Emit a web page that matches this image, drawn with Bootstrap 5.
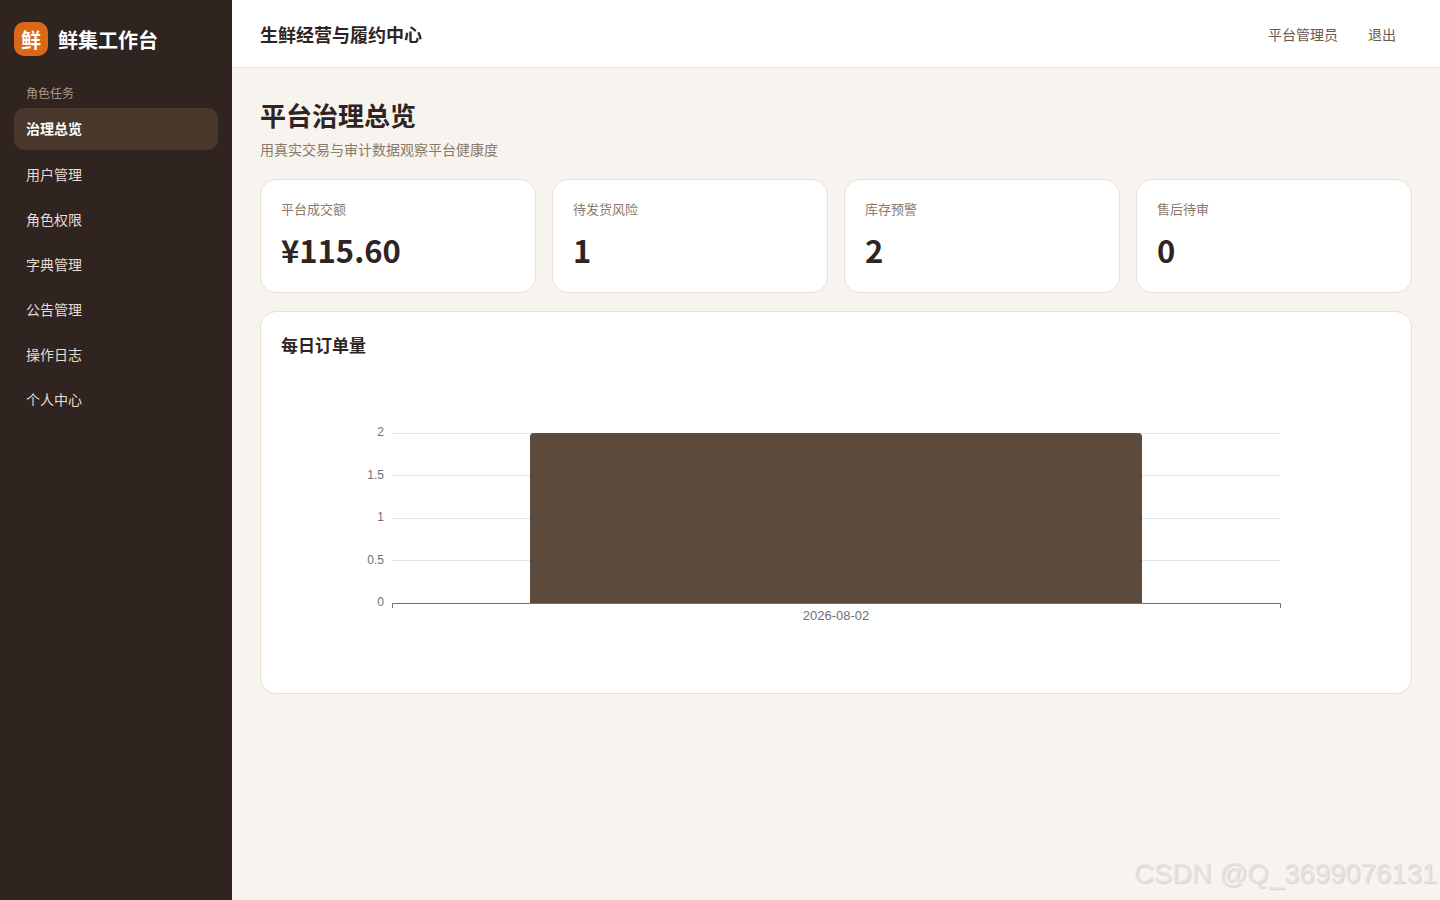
<!DOCTYPE html>
<html lang="zh-CN">
<head>
  <meta charset="UTF-8">
  <title>鲜集工作台</title>
  <link rel="stylesheet" href="https://cdn.jsdelivr.net/npm/bootstrap@5.3.3/dist/css/bootstrap.min.css">
  <script src="https://cdn.jsdelivr.net/npm/bootstrap@5.3.3/dist/js/bootstrap.bundle.min.js"></script>
  <style>
    body { font-family: "Noto Sans CJK SC", "Noto Sans", sans-serif; background: #f7f4ef; color: #2f241f; height: 900px; overflow: hidden; }
    .shell { height: 900px; }
    .side { width: 232px; background: #2f241f; padding: 22px 14px; flex-shrink: 0; }
    .brand-logo { width: 34px; height: 34px; background: #d96818; border-radius: 10px; color: #fff; font-size: 20px; font-weight: 700; line-height: 35px; text-align: center; }
    .brand-name { color: #fff; font-size: 20px; font-weight: 700; line-height: 36px; margin-left: 10px; }
    .side-label { color: #a8988a; font-size: 12px; line-height: 18px; margin: 26px 0 6px 12px; }
    .side .nav { gap: 3px; }
    .side .nav-link { color: #e6dcd3; font-size: 14px; line-height: 43px; height: 42px; padding: 0 12px; border-radius: 10px; }
    .side .nav-link.active { background: #4a382c; color: #fff; font-weight: 700; line-height: 41px; }
    .topbar { height: 68px; background: #fff; border-bottom: 1px solid #e8e2db; padding: 1px 29px 0 28px; }
    .top-title { font-size: 18px; font-weight: 700; }
    .top-link { font-size: 14px; color: #6b5a4e; padding: 0 15px; }
    .main-area { padding: 28px 28px 0; }
    .page-title { font-size: 26px; font-weight: 700; line-height: 38px; margin: 0; }
    .page-sub { font-size: 14px; line-height: 20px; color: #8a7868; margin: 5px 0 20px; }
    .stat-box { height: 114px; border: 1px solid #eadfd6; border-radius: 16px; padding: 19px 20px 20px; }
    .stat-name { font-size: 13px; line-height: 20px; color: #8a7868; }
    .stat-num { font-size: 31px; font-weight: 700; line-height: 44px; margin-top: 9px; }
    .chart-box { height: 383px; margin-top: 18px; border: 1px solid #eadfd6; border-radius: 16px; padding: 20px; }
    .chart-title { font-size: 17px; font-weight: 700; line-height: 26px; }
    .chart-svg { display: block; margin-top: 15px; }
    .chart-svg text { font-family: "Liberation Sans", sans-serif; font-size: 12px; fill: #6e7079; }
    .chart-svg .date-tick { font-size: 13px; }
    .watermark { position: absolute; right: 3px; bottom: 9px; font-family: "Liberation Sans", sans-serif; font-size: 27.5px; line-height: 34px; color: #e4e3e0; text-shadow: 1px 1px 1px rgba(0, 0, 0, .14); }
  </style>
</head>
<body>
  <div class="shell d-flex position-relative">
    <aside class="side">
      <div class="d-flex">
        <div class="brand-logo">鲜</div>
        <div class="brand-name">鲜集工作台</div>
      </div>
      <div class="side-label">角色任务</div>
      <nav class="nav flex-column">
        <a class="nav-link active" href="#">治理总览</a>
        <a class="nav-link" href="#">用户管理</a>
        <a class="nav-link" href="#">角色权限</a>
        <a class="nav-link" href="#">字典管理</a>
        <a class="nav-link" href="#">公告管理</a>
        <a class="nav-link" href="#">操作日志</a>
        <a class="nav-link" href="#">个人中心</a>
      </nav>
    </aside>

    <div class="flex-grow-1">
      <header class="topbar d-flex align-items-center justify-content-between">
        <div class="top-title">生鲜经营与履约中心</div>
        <div class="d-flex">
          <span class="top-link">平台管理员</span>
          <span class="top-link">退出</span>
        </div>
      </header>

      <main class="main-area">
        <h1 class="page-title">平台治理总览</h1>
        <p class="page-sub">用真实交易与审计数据观察平台健康度</p>

        <div class="row g-3">
          <div class="col-3"><div class="stat-box bg-white"><div class="stat-name">平台成交额</div><div class="stat-num">¥115.60</div></div></div>
          <div class="col-3"><div class="stat-box bg-white"><div class="stat-name">待发货风险</div><div class="stat-num">1</div></div></div>
          <div class="col-3"><div class="stat-box bg-white"><div class="stat-name">库存预警</div><div class="stat-num">2</div></div></div>
          <div class="col-3"><div class="stat-box bg-white"><div class="stat-name">售后待审</div><div class="stat-num">0</div></div></div>
        </div>

        <div class="chart-box bg-white">
          <div class="chart-title">每日订单量</div>
          <svg class="chart-svg" width="1110" height="300" viewBox="0 0 1110 300">
            <g stroke="#e0e6f1" stroke-width="1">
              <line x1="111" x2="999" y1="60.5" y2="60.5"/>
              <line x1="111" x2="999" y1="102.5" y2="102.5"/>
              <line x1="111" x2="999" y1="145.5" y2="145.5"/>
              <line x1="111" x2="999" y1="187.5" y2="187.5"/>
            </g>
            <path d="M249 230V64a4 4 0 0 1 4-4H857a4 4 0 0 1 4 4V230Z" fill="#5c4a3d"/>
            <path d="M111.500 235V230.500H999.500V235" fill="none" stroke="#6e7079"/>
            <g text-anchor="end">
              <text x="103" y="63">2</text>
              <text x="103" y="106">1.5</text>
              <text x="103" y="148">1</text>
              <text x="103" y="191">0.5</text>
              <text x="103" y="233">0</text>
            </g>
            <text class="date-tick" x="555" y="247" text-anchor="middle">2026-08-02</text>
          </svg>
        </div>
      </main>
    </div>

    <div class="watermark">CSDN @Q_3699076131</div>
  </div>
</body>
</html>
